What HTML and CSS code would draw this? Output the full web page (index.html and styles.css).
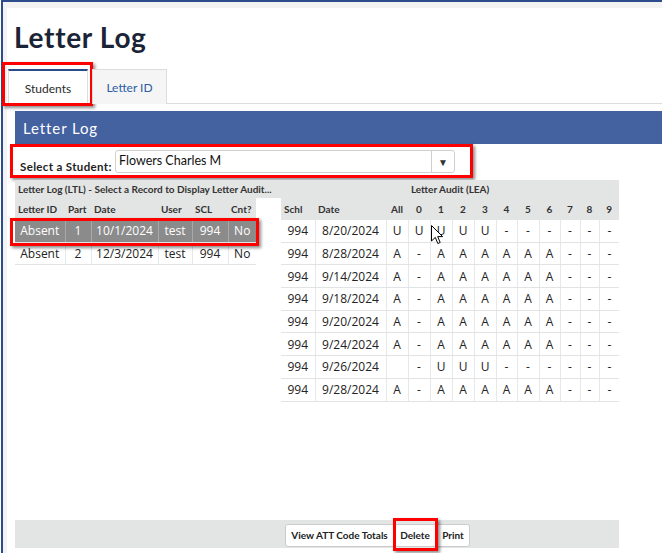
FILE: index.html
```html
<!DOCTYPE html>
<html>
<head>
<meta charset="utf-8">
<link rel="stylesheet" href="styles.css">
</head>
<body>
<div class="frame">
  <div class="page">
    <h1 class="title">Letter Log</h1>
    <div class="tabs">
      <div class="tab active">Students<span class="mark mark-tab"></span></div>
      <div class="tab">Letter ID</div>
    </div>
    <div class="panel">
      <div class="panel-head">Letter Log</div>
      <div class="select-row">
        <span class="select-label">Select a Student:</span>
        <div class="select"><span class="select-value">Flowers Charles M</span><span class="select-arrow">&#9660;</span></div>
        <span class="mark mark-select"></span>
      </div>
      <div class="tables">
        <div class="ltl">
          <div class="ltl-title">Letter Log (LTL) - Select a Record to Display Letter Audit...</div>
          <table class="grid ltl-table">
            <colgroup><col class="c50"><col class="c26"><col class="c67"><col class="c34"><col class="c36"><col class="c28"></colgroup>
            <thead><tr><th>Letter ID</th><th>Part</th><th>Date</th><th>User</th><th>SCL</th><th>Cnt?</th></tr></thead>
            <tbody>
              <tr class="sel"><td>Absent</td><td>1</td><td>10/1/2024</td><td>test</td><td>994</td><td>No</td></tr>
              <tr><td>Absent</td><td>2</td><td>12/3/2024</td><td>test</td><td>994</td><td>No</td></tr>
            </tbody>
          </table>
          <span class="mark mark-row"></span>
        </div>
        <div class="lea">
          <table class="grid lea-table">
            <colgroup><col class="c34"><col class="c71"><col class="c22"><col class="c22"><col class="c22"><col class="c22"><col class="c22"><col class="c21"><col class="c22"><col class="c21"><col class="c20"><col class="c19"><col class="c20"></colgroup>
            <thead>
              <tr><th class="cap" colspan="13">Letter Audit (LEA)</th></tr>
              <tr><th>Schl</th><th>Date</th><th class="ctr">All</th><th class="ctr">0</th><th class="ctr">1</th><th class="ctr">2</th><th class="ctr">3</th><th class="ctr">4</th><th class="ctr">5</th><th class="ctr">6</th><th class="ctr">7</th><th class="ctr">8</th><th class="ctr">9</th></tr>
            </thead>
            <tbody>
              <tr><td>994</td><td>8/20/2024</td><td>U</td><td>U</td><td>U</td><td>U</td><td>U</td><td>-</td><td>-</td><td>-</td><td>-</td><td>-</td><td>-</td></tr>
              <tr><td>994</td><td>8/28/2024</td><td>A</td><td>-</td><td>A</td><td>A</td><td>A</td><td>A</td><td>A</td><td>A</td><td>-</td><td>-</td><td>-</td></tr>
              <tr><td>994</td><td>9/14/2024</td><td>A</td><td>-</td><td>A</td><td>A</td><td>A</td><td>A</td><td>A</td><td>A</td><td>-</td><td>-</td><td>-</td></tr>
              <tr><td>994</td><td>9/18/2024</td><td>A</td><td>-</td><td>A</td><td>A</td><td>A</td><td>A</td><td>A</td><td>A</td><td>-</td><td>-</td><td>-</td></tr>
              <tr><td>994</td><td>9/20/2024</td><td>A</td><td>-</td><td>A</td><td>A</td><td>A</td><td>A</td><td>A</td><td>A</td><td>-</td><td>-</td><td>-</td></tr>
              <tr><td>994</td><td>9/24/2024</td><td>A</td><td>-</td><td>A</td><td>A</td><td>A</td><td>A</td><td>A</td><td>A</td><td>-</td><td>-</td><td>-</td></tr>
              <tr><td>994</td><td>9/26/2024</td><td></td><td>-</td><td>U</td><td>U</td><td>U</td><td>-</td><td>-</td><td>-</td><td>-</td><td>-</td><td>-</td></tr>
              <tr><td>994</td><td>9/28/2024</td><td>A</td><td>-</td><td>A</td><td>A</td><td>A</td><td>A</td><td>A</td><td>A</td><td>-</td><td>-</td><td>-</td></tr>
            </tbody>
          </table>
          <svg class="cursor" width="13" height="20" viewBox="0 0 13 20"><path d="M0.5 0.5 L0.5 16 L4.3 12.4 L6.8 18.5 L9.2 17.5 L6.7 11.6 L11.6 11.6 Z" fill="#fff" stroke="#000" stroke-width="1" stroke-linejoin="round"/></svg>
        </div>
      </div>
      <div class="toolbar">
        <div class="btn-group">
          <button class="btn btn-view">View ATT Code Totals</button>
          <button class="btn btn-delete">Delete<span class="mark mark-btn"></span></button>
          <button class="btn btn-print">Print</button>
        </div>
      </div>
    </div>
  </div>
</div>
</body>
</html>
```
FILE: styles.css
```css
html, body {
  margin: 0;
  padding: 0;
}
body {
  font-family: Lato, "Open Sans", sans-serif;
  background: #fff;
  width: 662px;
  height: 553px;
  overflow: hidden;
}
.frame {
  margin-left: 1px;
  border-top: 2px solid #2c4c8c;
  border-left: 2px solid #2c4c8c;
  background: #f3f3f3;
  padding: 6px 0 0 4px;
  height: 553px;
  box-sizing: border-box;
}
.page {
  background: #fff;
  height: 100%;
  display: flow-root;
}
.title {
  margin: 12px 0 0 7px;
  font-size: 28px;
  line-height: 34px;
  font-weight: 700;
  letter-spacing: 0.7px;
  color: #1b2436;
}
.tabs {
  display: flex;
  gap: 4px;
  margin-top: 15px;
  height: 34px;
  padding-left: 1px;
  border-bottom: 1px solid #dcdcdc;
}
.tab {
  position: relative;
  box-sizing: border-box;
  width: 75px;
  height: 35px;
  margin-bottom: -1px;
  border: 1px solid #dcdcdc;
  border-bottom: none;
  background: #f5f5f5;
  font-size: 12px;
  color: #2d5ba8;
  display: flex;
  align-items: center;
  justify-content: center;
  padding-top: 1px;
}
.tab.active {
  width: 80px;
  background: #fff;
  border-top: 2px solid #2c4c8c;
  color: #2a2a2a;
}
.mark {
  position: absolute;
  box-sizing: border-box;
  border: 3px solid #f00;
  box-shadow: 2px 2px 3px rgba(0, 0, 0, 0.45);
  pointer-events: none;
}
.mark-tab {
  left: -7px;
  top: -9px;
  right: -6px;
  bottom: -2px;
}
.panel {
  margin: 7px 0 0 8px;
}
.panel-head {
  height: 33px;
  background: #4461a0;
  color: #fff;
  font-size: 15px;
  letter-spacing: 0.9px;
  padding-left: 8px;
  display: flex;
  align-items: center;
}
.select-row {
  position: relative;
  display: inline-flex;
  align-items: flex-end;
  gap: 2px;
  padding: 6px 0 5px 5px;
}
.mark-select {
  left: -5px;
  right: -18px;
  top: 0;
  bottom: 0;
}
.select-label {
  width: 93px;
  font-size: 11.5px;
  font-weight: 700;
  letter-spacing: 0.35px;
  color: #1e1e1e;
  line-height: 12px;
  white-space: nowrap;
}
.select {
  width: 340px;
  height: 23px;
  box-sizing: border-box;
  border: 1px solid #cfcfcf;
  border-radius: 3px;
  display: flex;
  font-size: 12.5px;
  background: #fff;
}
.select-value {
  flex: 1;
  padding-left: 3px;
  line-height: 20px;
  color: #111;
}
.select-arrow {
  width: 22px;
  border-left: 1px solid #cfcfcf;
  display: flex;
  align-items: center;
  justify-content: center;
  font-size: 10px;
  color: #333;
}
.tables {
  display: flex;
  margin-top: 2px;
  height: 340px;
}
.ltl {
  position: relative;
  width: 266px;
}
.ltl-title {
  height: 18px;
  background: #e3e4e4;
  font-size: 10px;
  font-weight: 700;
  color: #333;
  line-height: 18px;
  padding-left: 3px;
  white-space: nowrap;
  overflow: hidden;
}
.grid {
  border-collapse: collapse;
  table-layout: fixed;
}
.ltl-table { width: 241px; }
.lea-table { width: 338px; }
.c19 { width: 19px; }
.c20 { width: 20px; }
.c21 { width: 21px; }
.c22 { width: 22px; }
.c26 { width: 26px; }
.c28 { width: 28px; }
.c34 { width: 34px; }
.c36 { width: 36px; }
.c50 { width: 50px; }
.c67 { width: 67px; }
.c71 { width: 71px; }
.grid th {
  background: #e3e4e4;
  height: 22px;
  padding: 0 0 0 3px;
  font-size: 10px;
  font-weight: 700;
  color: #333;
  text-align: left;
  white-space: nowrap;
}
.grid th.ctr {
  text-align: center;
  padding: 0;
}
.grid th.cap {
  height: 18px;
  text-align: center;
  font-size: 10px;
  padding: 0;
}
.grid td {
  height: 21.7px;
  padding: 0;
  font-family: "Open Sans", sans-serif;
  font-size: 12px;
  color: #222;
  text-align: center;
  white-space: nowrap;
  border-right: 1px solid #e6e9ec;
  border-bottom: 1px solid #e0e4e7;
}
.grid td:last-child {
  border-right: none;
}
.grid tr.sel td {
  background: #8b8b8b;
  color: #fff;
  border-right-color: #a9a9a9;
}
.grid tr.sel td:last-child {
  border-right: none;
}
.mark-row {
  left: -5px;
  top: 38px;
  width: 249px;
  height: 28px;
}
.lea {
  position: relative;
  width: 338px;
}
.cursor {
  position: absolute;
  left: 150px;
  top: 45px;
}
.toolbar {
  width: 604px;
  height: 28px;
  box-sizing: border-box;
  background: #e3e4e4;
  padding: 3px 0 0 270px;
}
.btn-group {
  display: inline-flex;
  height: 23px;
  box-sizing: border-box;
  border: 1px solid #cccccc;
  border-radius: 3px;
  background: #fff;
}
.btn {
  position: relative;
  border: none;
  background: transparent;
  margin: 0;
  padding: 0;
  height: 21px;
  font-family: Lato, sans-serif;
  font-size: 10px;
  font-weight: 700;
  color: #222;
}
.btn-view { width: 107px; }
.btn-delete { width: 44px; }
.btn-print { width: 32px; }
.mark-btn {
  left: 0;
  right: -1px;
  top: -7px;
  bottom: -5px;
}
```
